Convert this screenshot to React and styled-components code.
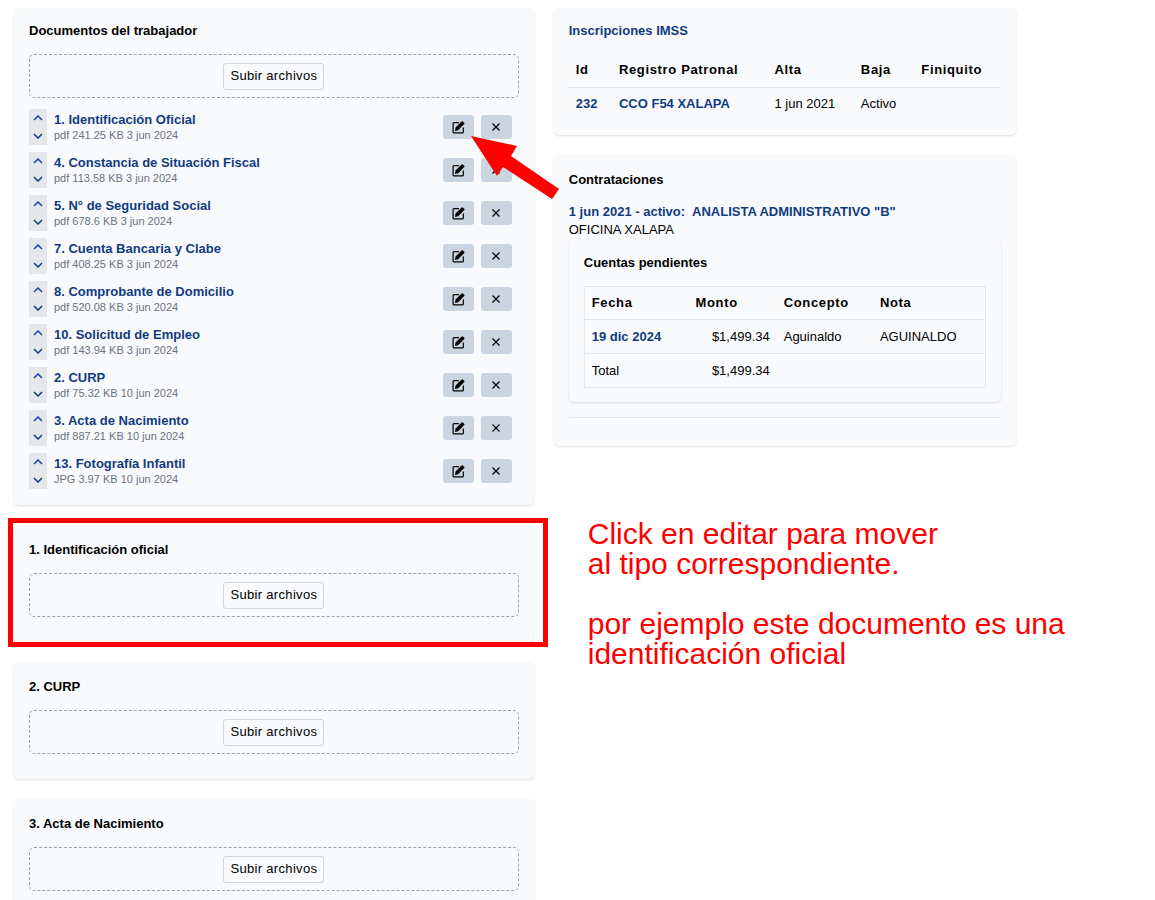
import React from 'react';
import styled, {createGlobalStyle} from 'styled-components';

const GlobalStyle = createGlobalStyle`
  *, *::before, *::after {
    box-sizing: border-box;
  }
  body {
    margin: 0;
    background-color: #fff;
    color: #000;
    font-family: "Liberation Sans", Arial, sans-serif;
    font-size: 13px;
    line-height: 18px;
  }
`;

const Page = styled.main`
  display: grid;
  grid-template-columns: 45vw 40vw;
  column-gap: 20px;
  align-items: start;
  padding: 8px 0 8px 14px;
`;

const Column = styled.div`
  display: flex;
  flex-direction: column;
  gap: 20px;
`;

const Card = styled.section`
  position: relative;
  padding: ${props => props.$padding || '16px 15px 25px'};
  background-color: #f9fafc;
  border-radius: 5px;
  box-shadow: 0 1px 3px rgba(0, 0, 0, 0.08), 0 1px 2px rgba(0, 0, 0, 0.05);
`;

// red frame drawn around a card
const Highlight = styled.div`
  position: absolute;
  top: -7px;
  right: -14px;
  bottom: -5px;
  left: -6px;
  border: 5px solid #f00;
  pointer-events: none;
`;

const Title = styled.h2`
  margin: 0 0 14px;
  color: ${props => props.$blue ? '#123a80' : '#000'};
  font-size: 13px;
  line-height: 18px;
  font-weight: bold;
`;

const DropZone = styled.div`
  display: flex;
  justify-content: center;
  align-items: center;
  height: 44px;
  border: 1px dashed #9ca3af;
  border-radius: 5px;
`;

const UploadButton = styled.button`
  height: 27px;
  padding: 0 6px;
  border: 1px solid #d1d5db;
  border-radius: 3px;
  background-color: #f9fafc;
  color: #000;
  font-family: inherit;
  font-size: 13px;
  line-height: 18px;
  letter-spacing: 0.025em;
  cursor: pointer;
`;

const FileList = styled.ul`
  display: flex;
  flex-direction: column;
  gap: 7px;
  margin: 11px 0 0;
  padding: 0;
  list-style: none;
`;

const FileRow = styled.li`
  position: relative;
  display: flex;
  align-items: center;
  height: 36px;
  padding-right: 7px;
`;

const Sorter = styled.div`
  display: flex;
  flex-direction: column;
  width: 18px;
  margin-right: 7px;
  background-color: #e5e7eb;
`;

const SortButton = styled.button`
  display: flex;
  justify-content: center;
  align-items: center;
  height: 18px;
  padding: 0;
  border: 0;
  background-color: transparent;
  color: ${props => props.$up ? '#1e40af' : '#123a80'};
  cursor: pointer;
`;

const FileInfo = styled.div`
  flex: 1;
  min-width: 0;
  padding-bottom: 3px;
`;

const Link = styled.a`
  color: #123a80;
  font-weight: bold;
  text-decoration: none;
`;

const FileMeta = styled.div`
  color: #6b7280;
  font-size: 11px;
  line-height: 12px;
`;

const Actions = styled.div`
  display: flex;
  gap: 7px;
`;

const ActionButton = styled.button`
  display: flex;
  justify-content: center;
  align-items: center;
  width: 31px;
  height: 24px;
  padding: 0;
  border: 0;
  border-radius: 3px;
  background-color: #cbd5e1;
  color: #000;
  cursor: pointer;
`;

const Arrow = styled.svg`
  position: absolute;
  top: 26px;
  right: -41px;
  z-index: 1;
  pointer-events: none;
`;

const Table = styled.table`
  width: 100%;
  table-layout: fixed;
  border-collapse: collapse;
  border: ${props => props.$boxed ? '1px solid #e5e7eb' : '0'};

  th, td {
    height: 33px;
    padding: 0 7px;
    text-align: left;
    white-space: nowrap;
  }
  th {
    letter-spacing: 0.05em;
  }
  td {
    height: 34px;
  }
  tbody tr {
    border-top: 1px solid #e5e7eb;
  }
`;

const Col = styled.col`
  width: ${props => props.$width};
`;

const Amount = styled.td`
  && {
    text-align: right;
  }
`;

const Contract = styled.div`
  padding-bottom: 15px;
  border-bottom: 1px solid #e5e7eb;
`;

const Position = styled.span`
  margin-left: 7px;
`;

const Note = styled.p`
  margin: 53px 0 0 34px;
  color: #f00;
  font-size: 30px;
  line-height: 30px;
  white-space: pre;
`;

const files = [
  {name: '1. Identificación Oficial', meta: 'pdf 241.25 KB 3 jun 2024'},
  {name: '4. Constancia de Situación Fiscal', meta: 'pdf 113.58 KB 3 jun 2024'},
  {name: '5. N° de Seguridad Social', meta: 'pdf 678.6 KB 3 jun 2024'},
  {name: '7. Cuenta Bancaria y Clabe', meta: 'pdf 408.25 KB 3 jun 2024'},
  {name: '8. Comprobante de Domicilio', meta: 'pdf 520.08 KB 3 jun 2024'},
  {name: '10. Solicitud de Empleo', meta: 'pdf 143.94 KB 3 jun 2024'},
  {name: '2. CURP', meta: 'pdf 75.32 KB 10 jun 2024'},
  {name: '3. Acta de Nacimiento', meta: 'pdf 887.21 KB 10 jun 2024'},
  {name: '13. Fotografía Infantil', meta: 'JPG 3.97 KB 10 jun 2024'},
];

const types = ['1. Identificación oficial', '2. CURP', '3. Acta de Nacimiento'];

const Chevron = ({d}) => (
  <svg width="10" height="6" viewBox="0 0 10 6" fill="none" stroke="currentColor" strokeWidth="1.5">
    <path d={d}/>
  </svg>
);

const EditIcon = () => (
  <svg width="13" height="13" viewBox="0 0 13 13" fill="none">
    <path d="M7 1.6H2a.9.9 0 0 0-.9.9v8.4a.9.9 0 0 0 .9.9h8.4a.9.9 0 0 0 .9-.9V6.5" stroke="currentColor" strokeWidth="1.2"/>
    <path d="M3 9.9l.5-3.3L9.4.7a1.2 1.2 0 0 1 1.7 0l.9.9a1.2 1.2 0 0 1 0 1.7L6.2 9.3z" fill="currentColor"/>
  </svg>
);

const CloseIcon = () => (
  <svg width="8" height="8" viewBox="0 0 8 8" stroke="currentColor" strokeWidth="1.2">
    <path d="M.5.5l7 7M7.5.5l-7 7"/>
  </svg>
);

const Upload = () => (
  <DropZone>
    <UploadButton type="button">Subir archivos</UploadButton>
  </DropZone>
);

const FileItem = ({file, pointed}) => (
  <FileRow>
    <Sorter>
      <SortButton type="button" $up aria-label={`Subir ${file.name}`}>
        <Chevron d="M1 5l4-4 4 4"/>
      </SortButton>
      <SortButton type="button" aria-label={`Bajar ${file.name}`}>
        <Chevron d="M1 1l4 4 4-4"/>
      </SortButton>
    </Sorter>
    <FileInfo>
      <Link href="#">{file.name}</Link>
      <FileMeta>{file.meta}</FileMeta>
    </FileInfo>
    <Actions>
      <ActionButton type="button" aria-label={`Editar ${file.name}`}><EditIcon/></ActionButton>
      <ActionButton type="button" aria-label={`Eliminar ${file.name}`}><CloseIcon/></ActionButton>
    </Actions>
    {pointed && (
      <Arrow width="89" height="65" viewBox="0 0 89 65" aria-hidden="true">
        <path d="M0 1L46 11 40 21 88 54 81 64 32 32 26 41z" fill="#f00"/>
      </Arrow>
    )}
  </FileRow>
);

const App = () => (
  <>
    <GlobalStyle/>
    <Page>
      <Column>
        <Card $padding="14px 15px 16px">
          <Title>Documentos del trabajador</Title>
          <Upload/>
          <FileList>
            {files.map((file, i) => <FileItem key={file.name} file={file} pointed={i === 0}/>)}
          </FileList>
        </Card>
        {types.map((type, i) => (
          <Card key={type}>
            <Title>{type}</Title>
            <Upload/>
            {i === 0 && <Highlight/>}
          </Card>
        ))}
      </Column>

      <Column>
        <Card $padding="14px 15px">
          <Title $blue>Inscripciones IMSS</Title>
          <Table>
            <colgroup>
              <Col $width="10%"/>
              <Col $width="36%"/>
              <Col $width="20%"/>
              <Col $width="14%"/>
              <Col/>
            </colgroup>
            <thead>
              <tr>
                <th>Id</th>
                <th>Registro Patronal</th>
                <th>Alta</th>
                <th>Baja</th>
                <th>Finiquito</th>
              </tr>
            </thead>
            <tbody>
              <tr>
                <td><Link href="#">232</Link></td>
                <td><Link href="#">CCO F54 XALAPA</Link></td>
                <td>1 jun 2021</td>
                <td>Activo</td>
                <td/>
              </tr>
            </tbody>
          </Table>
        </Card>

        <Card $padding="16px 15px 28px">
          <Title>Contrataciones</Title>
          <Contract>
            <Link href="#">1 jun 2021 - activo:<Position>ANALISTA ADMINISTRATIVO "B"</Position></Link>
            <div>OFICINA XALAPA</div>
            <Card $padding="15px 15px 14px">
              <Title>Cuentas pendientes</Title>
              <Table $boxed>
                <colgroup>
                  <Col $width="26%"/>
                  <Col $width="22%"/>
                  <Col $width="24%"/>
                  <Col/>
                </colgroup>
                <thead>
                  <tr>
                    <th>Fecha</th>
                    <th>Monto</th>
                    <th>Concepto</th>
                    <th>Nota</th>
                  </tr>
                </thead>
                <tbody>
                  <tr>
                    <td><Link href="#">19 dic 2024</Link></td>
                    <Amount>$1,499.34</Amount>
                    <td>Aguinaldo</td>
                    <td>AGUINALDO</td>
                  </tr>
                  <tr>
                    <td>Total</td>
                    <Amount>$1,499.34</Amount>
                    <td/>
                    <td/>
                  </tr>
                </tbody>
              </Table>
            </Card>
          </Contract>
        </Card>

        <Note>{'Click en editar para mover\nal tipo correspondiente.\n\npor ejemplo este documento es una\nidentificación oficial'}</Note>
      </Column>
    </Page>
  </>
);

export default App;
